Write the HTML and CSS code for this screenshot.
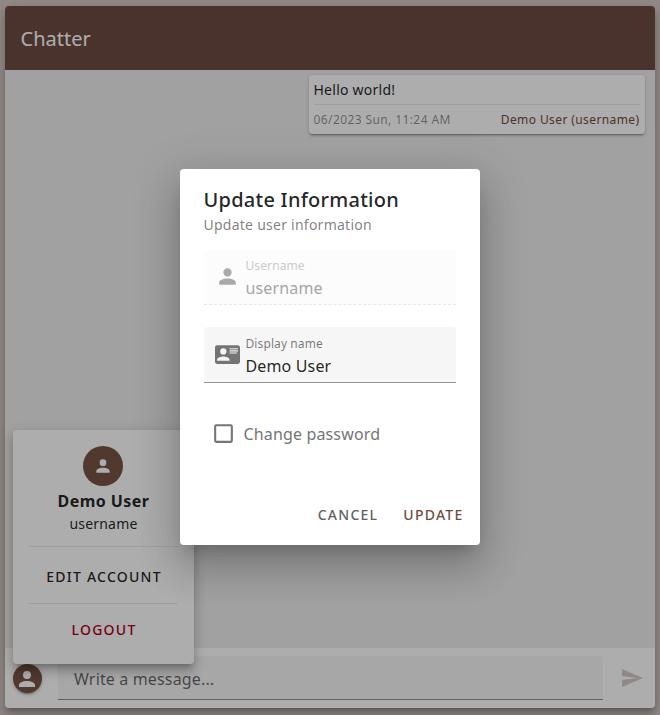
FILE: index.html
```html
<!DOCTYPE html>
<html lang="en">
<head>
<meta charset="utf-8">
<title>Chatter</title>
<link rel="stylesheet" href="styles.css">
</head>
<body>
<div class="app">
  <header class="bar">Chatter</header>
  <main class="messages">
    <article class="message">
      <p class="message-text">Hello world!</p>
      <footer class="message-meta"><span class="date">06/2023 Sun, 11:24 AM</span><span class="author">Demo User (username)</span></footer>
    </article>
  </main>
  <div class="composer">
    <div class="avatar avatar-small"><svg viewBox="0 0 24 24"><path d="M12 4a4 4 0 1 1 0 8a4 4 0 0 1 0-8m0 10c4.42 0 8 1.79 8 4v2H4v-2c0-2.21 3.58-4 8-4"/></svg></div>
    <div class="compose-field">Write a message...</div>
    <svg class="send" viewBox="0 0 24 24"><path d="M2 21l21-9L2 3v7l15 2l-15 2z"/></svg>
  </div>
</div>
<section class="menu">
  <div class="avatar"><svg viewBox="0 0 24 24"><path d="M12 4a4 4 0 1 1 0 8a4 4 0 0 1 0-8m0 10c4.42 0 8 1.79 8 4v2H4v-2c0-2.21 3.58-4 8-4"/></svg></div>
  <h3 class="menu-name">Demo User</h3>
  <p class="menu-username">username</p>
  <div class="menu-action">Edit account</div>
  <div class="menu-action logout">Logout</div>
</section>
<div class="scrim"></div>
<section class="dialog">
  <h2 class="dialog-title">Update Information</h2>
  <p class="dialog-subtitle">Update user information</p>
  <div class="field disabled">
    <svg viewBox="0 0 24 24"><path d="M12 4a4 4 0 1 1 0 8a4 4 0 0 1 0-8m0 10c4.42 0 8 1.79 8 4v2H4v-2c0-2.21 3.58-4 8-4"/></svg>
    <div class="field-body"><span class="label">Username</span><span class="value">username</span></div>
  </div>
  <div class="field">
    <svg viewBox="0 0 24 24"><path fill-rule="evenodd" d="M2 3h20c1.05 0 2 .95 2 2v14c0 1.05-.95 2-2 2H2c-1.05 0-2-.95-2-2V5c0-1.05.95-2 2-2m12 3v1h8V6zm0 2v1h8V8zm0 2v1h7v-1zm-6 3.910C6 13.910 2 15 2 17v1h12v-1c0-2-4-3.090-6-3.090M8 6a3 3 0 1 0 0 6a3 3 0 0 0 0-6"/></svg>
    <div class="field-body"><span class="label">Display name</span><span class="value">Demo User</span></div>
  </div>
  <div class="check-row">
    <svg viewBox="0 0 24 24"><path d="M19 3H5c-1.110 0-2 .89-2 2v14a2 2 0 0 0 2 2h14a2 2 0 0 0 2-2V5a2 2 0 0 0-2-2m0 2v14H5V5z"/></svg>
    <span>Change password</span>
  </div>
  <div class="actions"><span class="cancel">Cancel</span><span class="update">Update</span></div>
</section>
</body>
</html>
```
FILE: styles.css
```css
* { box-sizing: border-box; margin: 0; padding: 0; }
body {
  height: 715px;
  padding: 6px 5px 7px;
  overflow: hidden;
  background: #d7ccc8;
  color: rgba(0, 0, 0, .87);
  font: 16px/24px "Noto Sans", sans-serif;
}
svg { display: block; fill: currentColor; flex: none; }
.app {
  height: 702px;
  display: flex;
  flex-direction: column;
  border-radius: 4px;
  overflow: hidden;
  background: #fff;
  box-shadow: 0 5px 5px -3px rgba(0,0,0,.2), 0 8px 10px 1px rgba(0,0,0,.14), 0 3px 14px 2px rgba(0,0,0,.12);
}
.bar {
  height: 64px;
  padding: 0 15.5px;
  line-height: 65px;
  font-size: 20px;
  background: #6d4c41;
  color: #fff;
}
.messages { flex: 1; padding: 5px 10px; background: #eee; }
.message {
  width: 336px;
  height: 59px;
  margin-left: auto;
  padding: 0 5.5px 0 4.5px;
  border-radius: 4px;
  background: #fff;
  box-shadow: 0 3px 1px -2px rgba(0,0,0,.2), 0 2px 2px 0 rgba(0,0,0,.14), 0 1px 5px 0 rgba(0,0,0,.12);
}
.message-text {
  height: 30px;
  line-height: 29px;
  font-size: 14px;
  letter-spacing: .25px;
  border-bottom: 1px solid rgba(0,0,0,.08);
}
.message-meta {
  display: flex;
  justify-content: space-between;
  line-height: 29px;
  font-size: 12px;
  letter-spacing: .4px;
}
.date { color: rgba(0,0,0,.46); }
.author { color: #6d4c41; }
.composer { height: 60px; display: flex; padding: 8px; }
.avatar {
  flex: none;
  width: 40px;
  height: 40px;
  display: grid;
  place-items: center;
  border-radius: 50%;
  background: #795548;
  color: #fff;
}
.menu > .avatar { margin-left: -1px; }
.avatar svg { width: 20px; height: 20px; }
.avatar-small {
  width: 29px;
  height: 29px;
  margin-top: 8px;
  box-shadow: 0 3px 1px -2px rgba(0,0,0,.2), 0 2px 2px 0 rgba(0,0,0,.14), 0 1px 5px 0 rgba(0,0,0,.12);
}
.avatar-small svg { width: 24px; height: 24px; margin-left: -1px; }
.compose-field {
  width: 545px;
  height: 44px;
  margin-left: 16px;
  padding-left: 16px;
  line-height: 46px;
  letter-spacing: .15px;
  border-radius: 4px 4px 0 0;
  background: #f6f6f6;
  border-bottom: 1px solid rgba(0,0,0,.4);
  color: rgba(0,0,0,.6);
}
.send { width: 24px; height: 24px; margin: 10px 0 0 17px; color: #d5cac6; }
.menu {
  position: absolute;
  left: 13px;
  top: 430px;
  width: 181px;
  height: 234px;
  display: flex;
  flex-direction: column;
  align-items: center;
  padding: 16px;
  border-radius: 4px;
  background: #fff;
  box-shadow: 0 5px 5px -3px rgba(0,0,0,.2), 0 8px 10px 1px rgba(0,0,0,.14), 0 3px 14px 2px rgba(0,0,0,.12);
}
.menu-name { margin-top: 3px; font-size: 16px; font-weight: 700; letter-spacing: .45px; }
.menu-username { line-height: 21px; font-size: 14px; letter-spacing: .2px; }
.menu-action {
  flex: none;
  width: 149px;
  line-height: 36px;
  margin-top: 12px;
  padding: 12px 0 8px 1px;
  text-align: center;
  text-transform: uppercase;
  font-size: 14px;
  font-weight: 500;
  letter-spacing: 1.25px;
  border-top: 1px solid rgba(0,0,0,.08);
}
.menu-action.logout { margin-top: 0; padding-top: 8px; color: #b00020; }
.scrim { position: absolute; inset: 0; background: rgba(0,0,0,.32); }
.dialog {
  position: absolute;
  left: 180px;
  top: 169px;
  width: 300px;
  height: 376px;
  padding: 15px 24px 0;
  border-radius: 4px;
  background: #fff;
  box-shadow: 0 11px 15px -7px rgba(0,0,0,.2), 0 24px 38px 3px rgba(0,0,0,.14), 0 9px 46px 8px rgba(0,0,0,.12);
}
.dialog-title { margin-left: -.5px; line-height: 32px; font-size: 20px; font-weight: 500; letter-spacing: .25px; }
.dialog-subtitle { margin-left: -.5px; line-height: 18px; font-size: 14px; letter-spacing: .25px; color: rgba(0,0,0,.52); }
.field {
  height: 56px;
  display: flex;
  margin-top: 22px;
  padding: 15px 11px 0;
  border-radius: 4px 4px 0 0;
  background: #f6f6f6;
  border-bottom: 1px solid rgba(0,0,0,.4);
}
.field svg { width: 25px; height: 25px; color: #757575; }
.field-body { display: flex; flex-direction: column; margin: -7px 0 0 5.5px; }
.label { height: 17px; line-height: 17px; font-size: 12px; letter-spacing: .1px; color: rgba(0,0,0,.53); }
.value { line-height: 29px; letter-spacing: .15px; }
.field.disabled { height: 55px; margin-top: 16px; padding-top: 14px; background: #fcfcfc; border-bottom: 1px dashed #e8e8e8; }
.disabled svg { color: #a9a9a9; }
.disabled .label { color: #cacaca; }
.disabled .value { color: #a5a5a5; }
.check-row { height: 25px; display: flex; align-items: center; margin-top: 38px; padding-left: 7px; gap: 7.5px; color: #757575; letter-spacing: .15px; }
.check-row svg { width: 25px; height: 25px; }
.actions {
  display: flex;
  justify-content: flex-end;
  gap: 25px;
  margin: 57px -7.5px 0 0;
  text-transform: uppercase;
  font-size: 14px;
  font-weight: 500;
  letter-spacing: 1.25px;
}
.cancel { color: #616161; }
.update { color: #6d4c41; }
```
